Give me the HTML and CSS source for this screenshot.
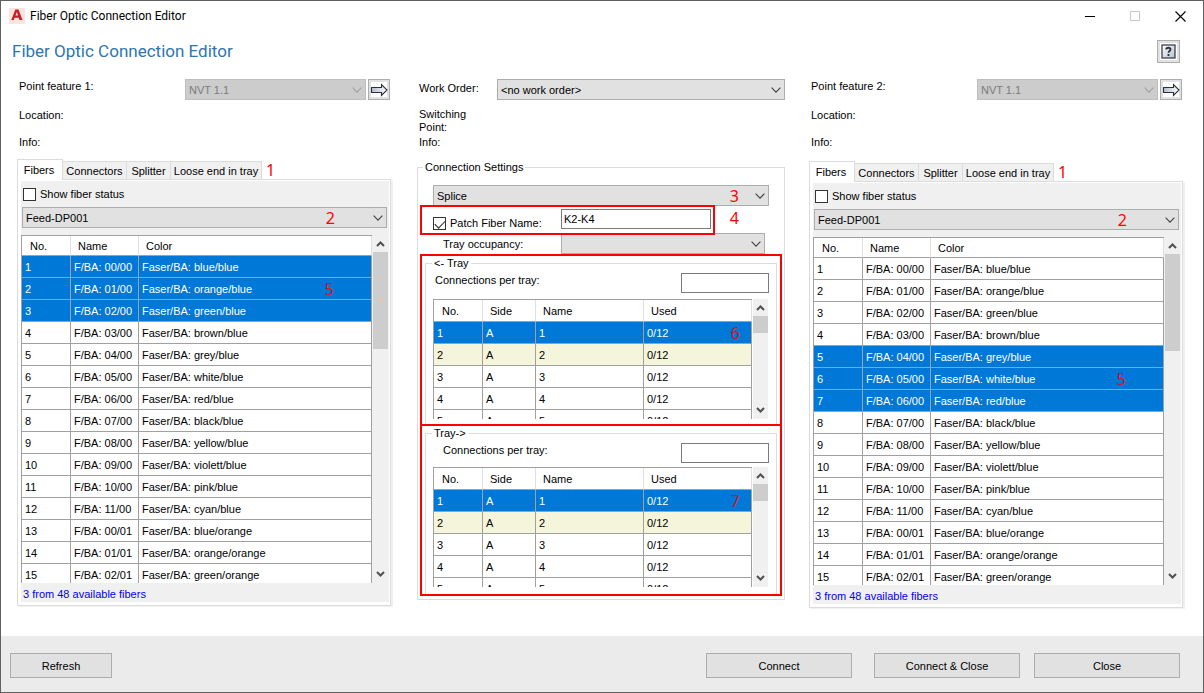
FILE: index.html
```html
<!DOCTYPE html>
<html lang="en">
<head>
    <meta charset="utf-8">
    <meta name="viewport" content="width=device-width, initial-scale=1">
    <title>Fiber Optic Connection Editor</title>
    <link rel="stylesheet" href="styles.css">
</head>

<body>
    <svg class="symbols" aria-hidden="true">
        <symbol id="chevron" viewBox="0 0 10 6"><path d="M.6 .7 5 5.1 9.4 .7" fill="none" stroke="currentColor" stroke-width="1.1"/></symbol>
        <symbol id="scroll-up" viewBox="0 0 9 6"><path d="M1 5 4.5 1.5 8 5" fill="none" stroke="#505050" stroke-width="2"/></symbol>
        <symbol id="scroll-down" viewBox="0 0 9 6"><path d="M1 1 4.5 4.5 8 1" fill="none" stroke="#505050" stroke-width="2"/></symbol>
        <symbol id="arrow" viewBox="0 0 18 14">
            <path d="M1.5 4.5H11.5V1.5L17 7 11.5 12.5V9.5H1.5Z" fill="url(#arrow-fill)" stroke="#2b3040" stroke-width="1.1"/>
        </symbol>
        <linearGradient id="arrow-fill"><stop offset="0" stop-color="#b4bbc8"/><stop offset="1" stop-color="#fff"/></linearGradient>
        <linearGradient id="help-fill" x2="1" y2="1"><stop offset="0" stop-color="#fff"/><stop offset="1" stop-color="#b9bfcc"/></linearGradient>
    </svg>

    <header class="titlebar">
        <svg class="app-icon" viewBox="0 0 16 16" aria-hidden="true">
            <rect width="16" height="16" fill="#fbe3de"/>
            <path d="M6.3 1.5H9.5L13.5 12H10.5L9.7 9.8H5.6L4.8 12H2.3Z" fill="#c4222b"/>
            <path d="M7.8 4 9 7.6H6.5Z" fill="#fbe3de"/>
        </svg>
        <span class="window-title">Fiber Optic Connection Editor</span>
        <button class="window-btn" aria-label="Minimize"><svg viewBox="0 0 11 11"><path d="M0 5.5H10" stroke="#000"/></svg></button>
        <button class="window-btn" aria-label="Maximize" disabled><svg viewBox="0 0 11 11"><path d="M.5 .5H9.5V9.5H.5Z" fill="none" stroke="#c8c8c8"/></svg></button>
        <button class="window-btn" aria-label="Close window"><svg viewBox="0 0 11 11"><path d="M.5 .5 10.5 10.5M10.5 .5 .5 10.5" stroke="#000" stroke-width="1.1"/></svg></button>
    </header>

    <div class="heading">
        <h1>Fiber Optic Connection Editor</h1>
        <button class="icon-btn help-btn" aria-label="Help">
            <svg viewBox="0 0 17 17"><rect width="17" height="17" fill="#fff"/><rect x="2" y="2" width="13" height="13" fill="url(#help-fill)" stroke="#3c4150" stroke-width="1.3"/><path d="M6.2 6.4C6.2 4.2 10.5 4.1 10.5 6.5 10.5 8 8.5 8 8.5 9.8M8.5 11V13" fill="none" stroke="#2b3040" stroke-width="1.8"/></svg>
        </button>
    </div>

    <main>
        <section class="column">
            <div class="feature">
                <label for="feature1">Point feature 1:</label>
                <span class="combo disabled"><select id="feature1" disabled><option>NVT 1.1</option></select><svg><use href="#chevron"/></svg></span>
                <button class="icon-btn" aria-label="Pick point feature 1"><svg><use href="#arrow"/></svg></button>
            </div>
            <p class="location">Location:</p>
            <p class="info">Info:</p>

            <nav class="tabs">
                <button class="tab active">Fibers</button>
                <button class="tab">Connectors</button>
                <button class="tab">Splitter</button>
                <button class="tab">Loose end in tray</button>
                <span class="mark">1</span>
            </nav>
            <div class="panel">
                <div class="panel-body">
                    <label class="check"><input type="checkbox">Show fiber status</label>
                    <span class="combo"><select aria-label="Cable"><option>Feed-DP001</option></select><svg><use href="#chevron"/></svg><span class="mark">2</span></span>
                    <div class="grid fibers">
                        <div class="rows">
                            <table>
                                <thead><tr><th>No.</th><th>Name</th><th>Color</th></tr></thead>
                                <tbody data-selected="1,2,3" data-mark="2"></tbody>
                            </table>
                        </div>
                        <div class="scrollbar"><svg><use href="#scroll-up"/></svg><span class="thumb"></span><svg><use href="#scroll-down"/></svg></div>
                    </div>
                    <p class="available">3 from 48 available fibers</p>
                </div>
            </div>
        </section>

        <section class="column">
            <div class="order">
                <label for="order">Work Order:</label>
                <span class="combo"><select id="order"><option>&lt;no work order&gt;</option></select><svg><use href="#chevron"/></svg></span>
            </div>
            <p class="switching">Switching<br>Point:</p>
            <p class="info close">Info:</p>

            <fieldset class="settings">
                <legend>Connection Settings</legend>
                <span class="combo method"><select aria-label="Connection type"><option>Splice</option></select><svg><use href="#chevron"/></svg><span class="mark">3</span></span>
                <div class="patch marked">
                    <label class="check"><input type="checkbox" checked>Patch Fiber Name:</label>
                    <input class="text" type="text" value="K2-K4" aria-label="Patch fiber name">
                    <span class="mark">4</span>
                </div>
                <div class="occupancy">
                    <label for="occupancy">Tray occupancy:</label>
                    <span class="combo"><select id="occupancy"><option></option></select><svg><use href="#chevron"/></svg></span>
                </div>
                <div class="marked">
                    <fieldset class="tray">
                        <legend>&lt;- Tray</legend>
                        <div class="per-tray">
                            <label for="tray-left">Connections per tray:</label>
                            <input class="text" type="text" id="tray-left">
                        </div>
                        <div class="grid trays">
                            <div class="rows">
                                <table>
                                    <thead><tr><th>No.</th><th>Side</th><th>Name</th><th>Used</th></tr></thead>
                                    <tbody data-mark="6"></tbody>
                                </table>
                            </div>
                            <div class="scrollbar"><svg><use href="#scroll-up"/></svg><span class="thumb"></span><svg><use href="#scroll-down"/></svg></div>
                        </div>
                    </fieldset>
                </div>
                <div class="marked joined">
                    <fieldset class="tray right-tray">
                        <legend>Tray-&gt;</legend>
                        <div class="per-tray">
                            <label for="tray-right">Connections per tray:</label>
                            <input class="text" type="text" id="tray-right">
                        </div>
                        <div class="grid trays">
                            <div class="rows">
                                <table>
                                    <thead><tr><th>No.</th><th>Side</th><th>Name</th><th>Used</th></tr></thead>
                                    <tbody data-mark="7"></tbody>
                                </table>
                            </div>
                            <div class="scrollbar"><svg><use href="#scroll-up"/></svg><span class="thumb"></span><svg><use href="#scroll-down"/></svg></div>
                        </div>
                    </fieldset>
                </div>
            </fieldset>
        </section>

        <section class="column lower">
            <div class="feature">
                <label for="feature2">Point feature 2:</label>
                <span class="combo disabled"><select id="feature2" disabled><option>NVT 1.1</option></select><svg><use href="#chevron"/></svg></span>
                <button class="icon-btn" aria-label="Pick point feature 2"><svg><use href="#arrow"/></svg></button>
            </div>
            <p class="location">Location:</p>
            <p class="info">Info:</p>

            <nav class="tabs">
                <button class="tab active">Fibers</button>
                <button class="tab">Connectors</button>
                <button class="tab">Splitter</button>
                <button class="tab">Loose end in tray</button>
                <span class="mark">1</span>
            </nav>
            <div class="panel">
                <div class="panel-body">
                    <label class="check"><input type="checkbox">Show fiber status</label>
                    <span class="combo"><select aria-label="Cable"><option>Feed-DP001</option></select><svg><use href="#chevron"/></svg><span class="mark">2</span></span>
                    <div class="grid fibers">
                        <div class="rows">
                            <table>
                                <thead><tr><th>No.</th><th>Name</th><th>Color</th></tr></thead>
                                <tbody data-selected="5,6,7" data-mark="6"></tbody>
                            </table>
                        </div>
                        <div class="scrollbar"><svg><use href="#scroll-up"/></svg><span class="thumb"></span><svg><use href="#scroll-down"/></svg></div>
                    </div>
                    <p class="available">3 from 48 available fibers</p>
                </div>
            </div>
        </section>
    </main>

    <footer>
        <button class="btn refresh">Refresh</button>
        <button class="btn connect">Connect</button>
        <button class="btn">Connect &amp; Close</button>
        <button class="btn">Close</button>
    </footer>

    <script>
        var colors = ['blue', 'orange', 'green', 'brown', 'grey', 'white', 'red', 'black', 'yellow', 'violett', 'pink', 'cyan'];

        function pad(n) {
            return n < 10 ? '0' + n : n;
        }

        // fibers: 12 per bundle, the bundle colour comes second
        document.querySelectorAll('.fibers tbody').forEach(function(body) {
            var selected = body.dataset.selected.split(',');
            var html = '';
            for (var i = 0; i < 15; i++) {
                var fiber = i % 12, bundle = Math.floor(i / 12), no = i + 1;
                html += '<tr' + (selected.includes(String(no)) ? ' class="selected"' : '') + '>' +
                    '<td>' + no + '</td>' +
                    '<td>F/BA: ' + pad(fiber) + '/' + pad(bundle) + '</td>' +
                    '<td>Faser/BA: ' + colors[fiber] + '/' + colors[bundle] +
                    (no == body.dataset.mark ? '<span class="mark">5</span>' : '') + '</td></tr>';
            }
            body.innerHTML = html;
        });

        document.querySelectorAll('.trays tbody').forEach(function(body) {
            var html = '';
            for (var no = 1; no <= 5; no++) {
                html += '<tr' + (no == 1 ? ' class="selected"' : no == 2 ? ' class="used"' : '') + '>' +
                    '<td>' + no + '</td><td>A</td><td>' + no + '</td><td>0/12' +
                    (no == 1 ? '<span class="mark">' + body.dataset.mark + '</span>' : '') + '</td></tr>';
            }
            body.innerHTML = html;
        });
    </script>
</body>
</html>
```
FILE: styles.css
```css
* {
    box-sizing: border-box;
}

body {
    margin: 0;
    height: 100vh;
    min-height: 693px;
    display: flex;
    flex-direction: column;
    border: 1px solid #606060;
    background: #fff;
    color: #000;
    font: 11px/14px "Liberation Sans", Arial, sans-serif;
}

p, h1 {
    margin: 0;
}

button, input, select {
    margin: 0;
    padding: 0;
    font: inherit;
    color: inherit;
}

.symbols {
    position: absolute;
    width: 0;
    height: 0;
}

/* title bar */
.titlebar {
    display: flex;
    align-items: center;
    height: 30px;
    padding-left: 8px;
}

.app-icon {
    width: 16px;
    height: 16px;
    margin-right: 5px;
}

.window-title {
    flex: 1;
    font: 12px/16px Roboto, "Noto Sans", sans-serif;
}

.window-btn {
    display: flex;
    align-items: center;
    justify-content: center;
    width: 45px;
    height: 29px;
    border: 0;
    background: none;
}

.window-btn svg {
    width: 11px;
    height: 11px;
}

.heading {
    display: flex;
    align-items: center;
    justify-content: space-between;
    height: 40px;
    padding: 0 23px 0 11px;
}

.heading h1 {
    font: 17px/24px Roboto, "Noto Sans", sans-serif;
    color: #2e75b0;
}

.icon-btn {
    display: flex;
    align-items: center;
    justify-content: center;
    width: 22px;
    height: 21px;
    border: 1px solid #adadad;
    background: #fff;
    box-shadow: inset 0 0 0 2px #e1e1e1;
}

.icon-btn svg {
    flex: none;
    width: 18px;
    height: 14px;
}

.help-btn {
    width: 23px;
    height: 23px;
}

.help-btn svg {
    width: 17px;
    height: 17px;
}

main {
    flex: 1;
    display: grid;
    grid-template-columns: 47fr 46fr 47fr;
    gap: 24px;
    min-height: 0;
    padding: 8px 18px 30px 16px;
}

.column {
    display: flex;
    flex-direction: column;
    min-width: 0;
    min-height: 0;
}

.feature, .order {
    display: flex;
    height: 21px;
    padding: 0 3px 0 2px;
}

.feature label, .order label {
    flex: 1;
}

.feature .combo {
    width: 181px;
    margin-right: 2px;
}

.order {
    padding-right: 0;
}

.order label {
    padding-top: 2px;
}

.order .combo {
    width: 288px;
}

.location, .info, .switching {
    padding-left: 2px;
}

.location {
    margin-top: 8px;
}

.info {
    margin-top: 13px;
}

.switching {
    margin-top: 8px;
    line-height: 13px;
}

.info.close {
    margin-top: 1px;
}

/* drop-downs */
.combo {
    position: relative;
    display: block;
    height: 21px;
}

.combo select {
    width: 100%;
    height: 21px;
    padding: 0 3px;
    border: 1px solid #adadad;
    border-radius: 0;
    background: #e1e1e1;
    appearance: none;
}

.combo svg {
    position: absolute;
    top: 8px;
    right: 4px;
    width: 10px;
    height: 6px;
    color: #404040;
    pointer-events: none;
}

.combo.disabled select {
    border-color: #bfbfbf;
    background: #ccc;
    color: #7b7b7b;
    opacity: 1;
}

.combo.disabled svg {
    color: #a0a0a0;
}

.check {
    display: flex;
    align-items: center;
    gap: 4px;
}

.check input {
    width: 13px;
    height: 13px;
    border: 1px solid #333;
    background: #fff;
    appearance: none;
}

.check input:checked::before {
    content: "";
    display: block;
    width: 9px;
    height: 5px;
    margin: 2px 0 0 1px;
    border: solid #222;
    border-width: 0 0 1px 1px;
    transform: rotate(-45deg);
}

.text {
    height: 20px;
    padding: 0 2px;
    border: 1px solid #7a7a7a;
    background: #fff;
}

/* tabs */
.tabs {
    display: grid;
    grid-template-columns: 46px 64px 44px 91px 20px;
    align-items: end;
    margin-top: 10px;
}

.tab {
    height: 18px;
    border: 1px solid #dcdcdc;
    border-width: 1px 1px 0 0;
    background: #f0f0f0;
    white-space: nowrap;
}

.tab.active {
    position: relative;
    height: 21px;
    margin-bottom: -1px;
    padding-right: 2px;
    border-left-width: 1px;
    background: #fff;
}

.panel {
    flex: 1;
    display: flex;
    min-height: 0;
    margin-right: 2px;
    padding: 1px 1px 3px 3px;
    border: 1px solid #dcdcdc;
    box-shadow: 2px 1px 0 #f0f0f0;
}

.panel-body {
    flex: 1;
    display: flex;
    flex-direction: column;
    min-width: 0;
    background: #f0f0f0;
}

.panel .check {
    height: 26px;
    padding-left: 2px;
}

.panel .combo {
    margin: 0 2px 7px 1px;
}

.available {
    padding: 4px 2px 1px;
    color: #00f;
}

/* the third column sits a little below the first one */
.lower .tabs {
    margin-top: 12px;
}

.lower .panel {
    margin-bottom: -2px;
}

/* data grids */
.grid {
    display: flex;
    gap: 1px;
    padding-right: 1px;
}

.fibers {
    flex: 1;
    min-height: 0;
}

.trays {
    height: 120px;
}

.rows {
    flex: 1;
    overflow: hidden;
}

.grid table {
    width: 100%;
    table-layout: fixed;
    border: solid #a0a0a0;
    border-width: 1px 0 0 1px;
    border-spacing: 0;
    background: #fff;
}

.grid th {
    height: 20px;
    padding: 0 7px;
    border-right: 1px solid #e0e0e0;
    border-bottom: 1px solid #a0a0a0;
    font-weight: normal;
    text-align: left;
}

.trays th {
    height: 22px;
}

.grid td {
    position: relative;
    height: 22px;
    padding: 0 3px;
    border: solid #a0a0a0;
    border-width: 0 1px 1px 0;
    white-space: nowrap;
}

.grid th:first-child {
    width: 49px;
    padding-left: 8px;
}

.fibers th:nth-child(2) {
    width: 68px;
}

.trays th:nth-child(2) {
    width: 53px;
}

.trays th:nth-child(3) {
    width: 108px;
}

.selected {
    background: #0078d7;
    color: #fff;
}

.used {
    background: #f5f5dc;
}

.scrollbar {
    display: flex;
    flex-direction: column;
    align-items: center;
    width: 15px;
    padding: 6px 0;
    background: #f0f0f0;
}

.scrollbar svg {
    width: 9px;
    height: 6px;
}

.scrollbar svg:last-child {
    margin-top: auto;
}

.thumb {
    width: 15px;
    height: 97px;
    margin-top: 5px;
    background: #cdcdcd;
}

.trays .thumb {
    height: 17px;
}

/* connection settings */
fieldset {
    min-width: 0;
    margin: 0;
    border: 1px solid #dcdcdc;
}

.settings {
    margin-top: 11px;
    padding: 11px 2px 3px;
}

legend {
    margin-left: 3px;
    padding: 0 2px;
}

.method {
    margin: 0 13px -1px;
}

.marked {
    position: relative;
    border: 2px solid #f00;
}

.joined {
    margin-top: -2px;
}

.patch {
    z-index: 1;
    display: flex;
    justify-content: space-between;
    width: 295px;
    height: 30px;
    padding: 2px 2px 0 11px;
}

.patch .check {
    padding-top: 4px;
}

.patch .text {
    width: 150px;
}

.occupancy {
    display: flex;
    justify-content: space-between;
    margin-top: -2px;
    padding: 0 17px 0 23px;
}

.occupancy label {
    padding-top: 4px;
}

.occupancy .combo {
    width: 204px;
}

.tray {
    margin: 0 3px;
    padding: 3px 7px 5px;
    border-bottom: 0;
}

.tray legend {
    margin-left: -1px;
}

.per-tray {
    display: flex;
    justify-content: space-between;
    margin-bottom: 6px;
    padding-left: 2px;
}

.per-tray .text {
    width: 88px;
}

.right-tray {
    padding-bottom: 7px;
}

.right-tray .per-tray {
    margin-bottom: 4px;
    padding-left: 10px;
}

/* red call-out numbers */
.mark {
    font: 16px/22px "Noto Sans", "Open Sans", sans-serif;
    color: #f00;
}

.tabs .mark {
    padding-left: 4px;
    line-height: 18px;
}

.combo .mark, .patch .mark, .grid .mark {
    position: absolute;
    top: 0;
}

.panel .combo .mark {
    right: 52px;
}

.method .mark {
    right: 30px;
}

.patch .mark {
    right: -26px;
}

.grid .mark {
    color: #d8141e;
}

.fibers .mark {
    right: 37px;
}

.trays .mark {
    right: 11px;
}

/* bottom buttons */
footer {
    display: flex;
    gap: 14px;
    height: 56px;
    padding: 17px 23px 0 9px;
    background: #ebebeb;
}

.btn {
    width: 146px;
    height: 25px;
    border: 1px solid #adadad;
    background: #e1e1e1;
}

.refresh {
    width: 102px;
    margin-right: auto;
}

.connect {
    margin-right: 8px;
}
```
